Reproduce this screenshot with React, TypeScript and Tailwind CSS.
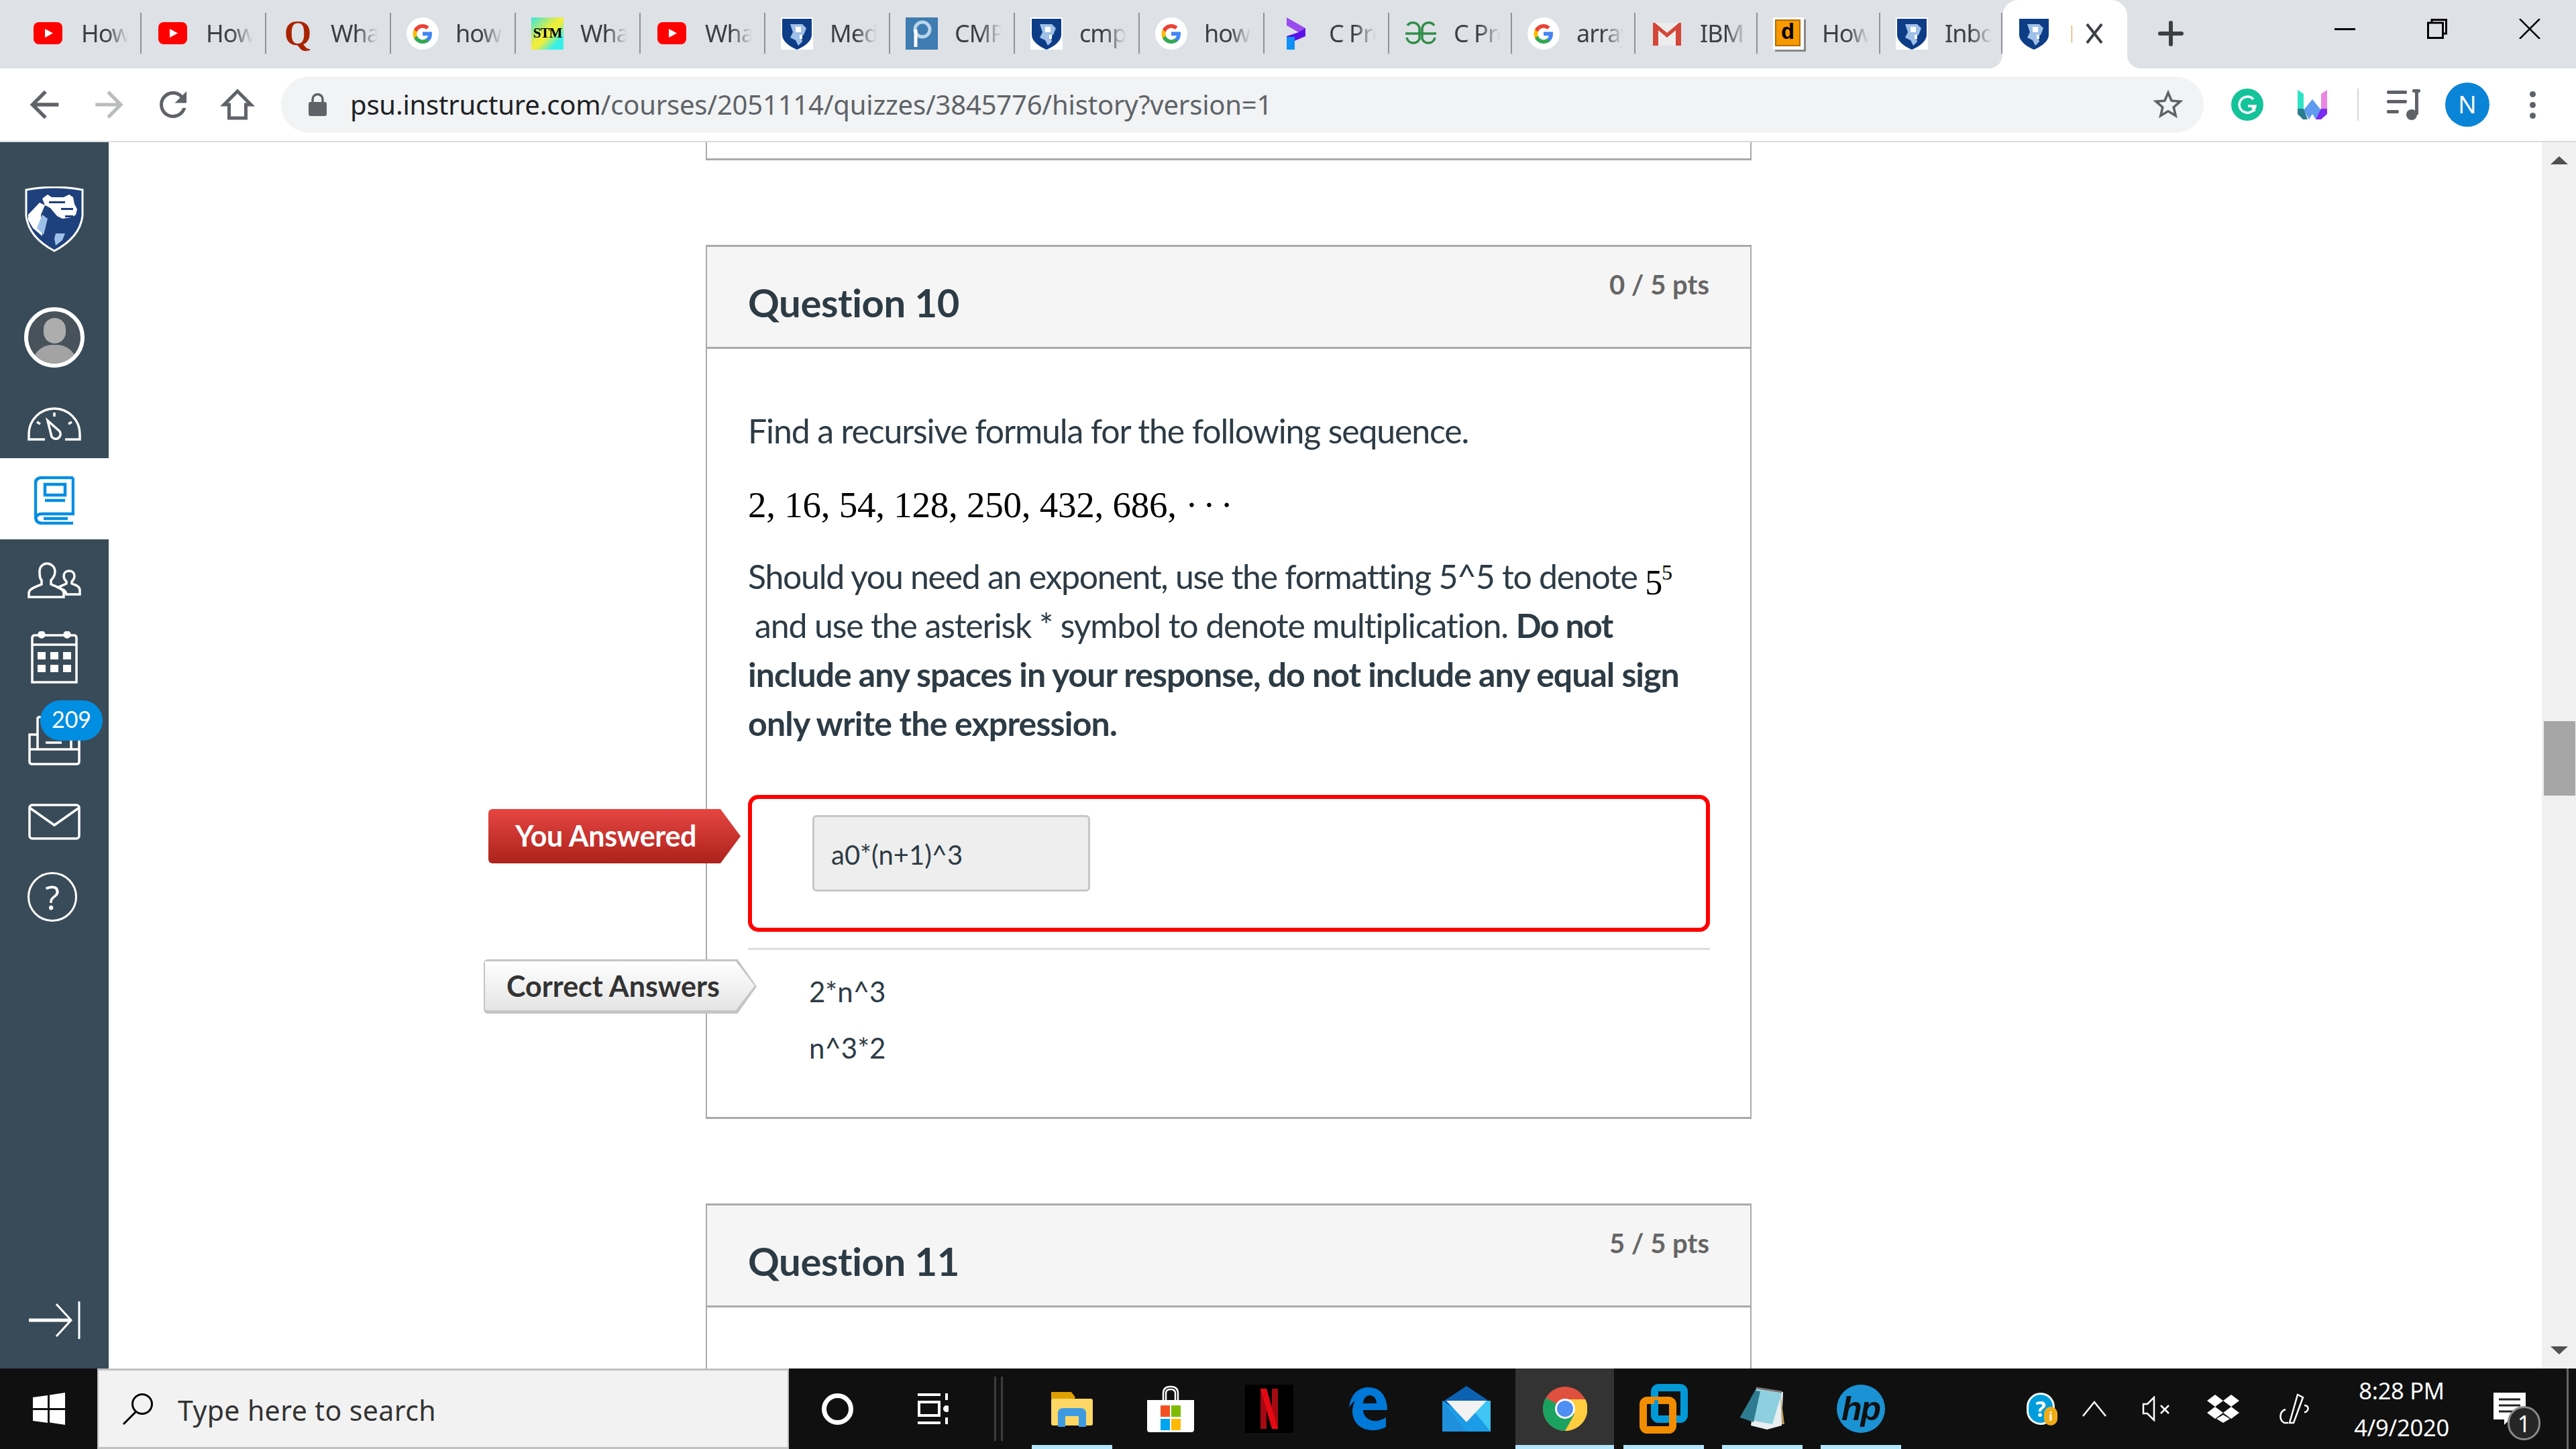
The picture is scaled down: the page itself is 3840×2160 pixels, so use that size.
import React from "react";

const Yt = () => (
  <svg width="48" height="48" viewBox="0 0 48 48"><rect x="2" y="7" width="43" height="33" rx="8" fill="#f00" /><path d="M19 17l12 6.5L19 30z" fill="#fff" /></svg>
);
const Quora = () => (
  <div className="w-[48px] h-[48px] flex items-center justify-center text-[#a82400] font-bold text-[52px] leading-none [font-family:'Liberation_Serif',serif]">Q</div>
);
const GoogleG = () => (
  <svg width="48" height="48" viewBox="0 0 48 48">
    <circle cx="24" cy="24" r="24" fill="#fff" />
    <path d="M38 24.500c0-1-.1-2-.3-3H24v5.700h7.900c-.3 1.800-1.400 3.400-2.900 4.400v3.700h4.700c2.800-2.500 4.300-6.300 4.300-10.800z" fill="#4285f4" />
    <path d="M24 39c3.900 0 7.200-1.300 9.700-3.500L29 31.800c-1.300.9-3 1.400-5 1.400-3.800 0-7-2.500-8.200-6h-4.800v3.800C13.400 35.700 18.300 39 24 39z" fill="#34a853" />
    <path d="M15.800 27.200c-.6-1.800-.6-3.700 0-5.500v-3.800H11c-2 4-2 9.100 0 13.100z" fill="#fbbc05" />
    <path d="M24 15.800c2.100 0 4 .7 5.500 2.100l4.100-4.100C31 11.400 27.700 10 24 10c-5.700 0-10.600 3.300-13 8l4.800 3.700c1.200-3.400 4.400-5.900 8.200-5.900z" fill="#ea4335" />
  </svg>
);
const Stm = () => (
  <div className="w-[48px] h-[48px] flex items-center justify-center bg-[linear-gradient(135deg,#36e6e0_0%,#f0ee3c_45%,#f0ee3c_55%,#36f0e8_80%)] text-black font-bold text-[21px] tracking-[-1px] leading-none [font-family:'Liberation_Serif',serif]">STM</div>
);
const Psu = () => (
  <svg width="48" height="48" viewBox="0 0 48 48">
    <rect width="48" height="48" fill="#fff" />
    <path d="M2 2h44v24c0 9-10 17-22 22C12 43 2 35 2 26z" fill="#0d3d86" />
    <path d="M14 10h18l6 6-4 10-4 2 2 8-6 6-4-8-8-4 4-8z" fill="#9fc0e6" />
    <path d="M22 14h8v8h-8zM28 26h4v6h-4z" fill="#fff" />
  </svg>
);
const Piazza = () => (
  <svg width="48" height="48" viewBox="0 0 48 48"><rect width="48" height="48" fill="#3e7cb1" /><circle cx="25" cy="18" r="11" fill="none" stroke="#b9d4ea" strokeWidth="5" /><path d="M15 18v26" stroke="#fff" strokeWidth="5" /></svg>
);
const Prog = () => (
  <svg width="48" height="48" viewBox="0 0 48 48"><path d="M10 0L38 16V28L10 12Z" fill="#9a4cf0" /><path d="M38 16V28L10 40V28L28 22Z" fill="#5a12e8" /><path d="M10 29h12V48H10Z" fill="#1090f5" /></svg>
);
const Gfg = () => (
  <svg width="48" height="48" viewBox="0 0 48 48" fill="none" stroke="#2f8d46" strokeWidth="3.500"><path d="M1 24h46" /><path d="M4 12a10 10 0 0 1 18 4v16a10 10 0 0 1-19-2" /><path d="M44 12a10 10 0 0 0-18 4v16a10 10 0 0 0 19-2" /></svg>
);
const Gmail = () => (
  <svg width="48" height="48" viewBox="0 0 48 48"><path d="M3 8h42v34H3z" fill="#ececec" /><path d="M3 42V8h3l18 15L42 8h3v34h-8V19L24 30 11 19v23z" fill="#d44638" /></svg>
);
const Dict = () => (
  <div className="w-[46px] h-[48px] bg-white p-[3px] pr-[5px] pb-[5px] shadow-[3px_3px_0_#888]">
    <div className="w-full h-full bg-[#f79a00] border-[2px] border-[#b26b00] flex items-center justify-center text-black font-bold text-[34px] leading-none [font-family:'Liberation_Mono',monospace]">d</div>
  </div>
);

const icons: Record<string, React.ReactNode> = {
  yt: <Yt />, q: <Quora />, g: <GoogleG />, stm: <Stm />, psu: <Psu />, p: <Piazza />, pr: <Prog />, gfg: <Gfg />, m: <Gmail />, d: <Dict />,
};

const tabs: { i: string; t: string; w: string }[] = [
  { i: "yt", t: "How", w: "w-[186px]" },
  { i: "yt", t: "How", w: "w-[186px]" },
  { i: "q", t: "What", w: "w-[186px]" },
  { i: "g", t: "how", w: "w-[186px]" },
  { i: "stm", t: "What", w: "w-[186px]" },
  { i: "yt", t: "What", w: "w-[186px]" },
  { i: "psu", t: "Med", w: "w-[186px]" },
  { i: "p", t: "CMP", w: "w-[186px]" },
  { i: "psu", t: "cmp", w: "w-[186px]" },
  { i: "g", t: "how", w: "w-[186px]" },
  { i: "pr", t: "C Pro", w: "w-[186px]" },
  { i: "gfg", t: "C Pro", w: "w-[183px]" },
  { i: "g", t: "array", w: "w-[184px]" },
  { i: "m", t: "IBM", w: "w-[182px]" },
  { i: "d", t: "How", w: "w-[183px]" },
  { i: "psu", t: "Inbox", w: "w-[182px]" },
];

function TabStrip() {
  return (
    <div className="h-[102px] bg-[#dee1e6] flex items-start pl-[25px] shrink-0">
      {tabs.map((tab, idx) => (
        <div key={idx} className={`${tab.w} h-[102px] flex items-center shrink-0 pb-[3px]`}>
          <div className="ml-[23px] w-[48px] h-[48px] shrink-0">{icons[tab.i]}</div>
          <div className="ml-[25px] w-[70px] overflow-hidden whitespace-nowrap text-[36px] leading-[48px] text-[#3c4043] tracking-[-1px] [font-family:'Noto_Sans',sans-serif] [mask-image:linear-gradient(to_right,black_55%,transparent)]">{tab.t}</div>
          <div className="ml-auto w-[2px] h-[61px] bg-[#8f9296] shrink-0" />
        </div>
      ))}
      <div className="relative w-[186px] h-[102px] bg-white rounded-t-[24px] flex items-center shrink-0 pb-[3px]">
        <svg className="absolute left-[-21px] bottom-0" width="21" height="22" viewBox="0 0 21 22"><path d="M21 0v22H0c12 0 21-8 21-22z" fill="#fff" /></svg>
        <svg className="absolute right-[-21px] bottom-0" width="21" height="22" viewBox="0 0 21 22"><path d="M0 0v22h21C9 22 0 14 0 0z" fill="#fff" /></svg>
        <div className="ml-[23px] w-[48px] h-[48px] shrink-0"><Psu /></div>
        <div className="ml-[29px] w-[4px] h-[36px] overflow-hidden text-[36px] leading-[36px] text-[#b8763c]">I</div>
        <svg className="ml-[19px]" width="28" height="32" viewBox="0 0 28 32" fill="none" stroke="#3c4043" strokeWidth="4"><path d="M3 2l22 28M25 2L3 30" /></svg>
      </div>
      <div className="w-[130px] h-[102px] flex items-center justify-center shrink-0 pb-[3px]">
        <svg width="38" height="38" viewBox="0 0 38 38" fill="none" stroke="#3c4043" strokeWidth="6" strokeLinecap="round"><path d="M19 3v32M3 19h32" /></svg>
      </div>
      <div className="ml-auto flex">
        <div className="w-[138px] h-[86px] flex items-center justify-center"><div className="w-[31px] h-[3px] bg-black" /></div>
        <div className="w-[138px] h-[86px] flex items-center justify-center">
          <svg width="30" height="30" viewBox="0 0 30 30" fill="none" stroke="#000" strokeWidth="3"><path d="M7 6V1.500h21.500V22H24" /><rect x="1.500" y="6" width="22" height="22.500" /></svg>
        </div>
        <div className="w-[138px] h-[86px] flex items-center justify-center">
          <svg width="32" height="30" viewBox="0 0 32 30" fill="none" stroke="#000" strokeWidth="2.500"><path d="M1 0l30 30M31 0L1 30" /></svg>
        </div>
      </div>
    </div>
  );
}

function Toolbar() {
  return (
    <div className="h-[108px] bg-white flex items-center shrink-0 relative">
      <div className="w-[132px] flex justify-center shrink-0">
        <svg width="64" height="64" viewBox="0 0 24 24" fill="#5f6368"><path d="M20 11H7.830l5.590-5.590L12 4l-8 8 8 8 1.410-1.410L7.830 13H20z" /></svg>
      </div>
      <div className="w-[62px] flex justify-center shrink-0">
        <svg width="64" height="64" viewBox="0 0 24 24" fill="#babcbe"><path d="M4 11h12.170l-5.590-5.590L12 4l8 8-8 8-1.410-1.410L16.170 13H4z" /></svg>
      </div>
      <div className="w-[128px] flex justify-center shrink-0">
        <svg width="60" height="60" viewBox="0 0 24 24" fill="#5f6368"><path d="M17.650 6.350A7.958 7.958 0 0 0 12 4c-4.420 0-7.990 3.580-7.990 8s3.570 8 7.990 8c3.730 0 6.840-2.550 7.730-6h-2.080A5.990 5.990 0 0 1 12 18c-3.310 0-6-2.690-6-6s2.690-6 6-6c1.660 0 3.140.69 4.220 1.780L13 11h7V4z" /></svg>
      </div>
      <div className="w-[64px] flex justify-center shrink-0">
        <svg width="60" height="60" viewBox="0 0 24 24" fill="none" stroke="#5f6368" strokeWidth="2"><path d="M12 4l-8 8h3v8h10v-8h3z" /></svg>
      </div>
      <div className="ml-[33px] w-[2866px] h-[84px] bg-[#f1f3f4] rounded-[42px] flex items-center shrink-0">
        <svg className="ml-[41px]" width="27" height="34" viewBox="0 0 27 34"><path d="M6 14V9a7.500 7.500 0 0 1 15 0v5" fill="none" stroke="#5f6368" strokeWidth="3.500" /><rect y="13" width="27" height="21" rx="3" fill="#5f6368" /></svg>
        <div className="ml-[35px] text-[40px] leading-[48px] tracking-[-0.200px] text-[#5f6368] [font-family:'Noto_Sans',sans-serif] whitespace-nowrap">
          <span className="text-[#202124]">psu.instructure.com</span>/courses/2051114/quizzes/3845776/history?version=1
        </div>
        <svg className="ml-auto mr-[26px]" width="54" height="54" viewBox="0 0 24 24" fill="#5f6368"><path d="M22 9.240l-7.190-.62L12 2 9.190 8.630 2 9.240l5.460 4.730L5.820 21 12 17.270 18.180 21l-1.630-7.030zM12 15.400l-3.760 2.270 1-4.280-3.320-2.880 4.380-.38L12 6.100l1.710 4.040 4.380.38-3.320 2.880 1 4.280z" /></svg>
      </div>
      <div className="ml-[41px] w-[48px] h-[48px] rounded-full bg-[#15c39a] flex items-center justify-center shrink-0">
        <svg width="32" height="32" viewBox="0 0 32 32" fill="none" stroke="#fff" strokeWidth="3.500"><path d="M25 8a12 12 0 1 0 3 10H17" /><path d="M23 18l4 8" /></svg>
      </div>
      <svg className="ml-[50px] shrink-0" width="46" height="48" viewBox="0 0 46 48">
        <path d="M1 2l9 6v22l-9 8z" fill="#2fe4c6" /><path d="M45 2l-9 6v22l9 8z" fill="#e986e0" /><path d="M23 16l13 16-8 14-5-8-5 8-8-14z" fill="#5f9cf0" /><path d="M1 30l9 0 6 16-7 0-8-8z" fill="#2c7c90" /><path d="M45 30h-9l-8 16h8l9-8z" fill="#7a2cf0" />
      </svg>
      <div className="ml-[44px] w-[2px] h-[48px] bg-[#d5d7da] shrink-0" />
      <svg className="ml-[42px] shrink-0" width="50" height="46" viewBox="0 0 50 46" fill="#5f6368"><rect y="2" width="30" height="5" rx="2" /><rect y="16" width="30" height="5" rx="2" /><rect y="31" width="18" height="5" rx="2" /><rect x="38" y="0" width="12" height="5" rx="2" /><rect x="42" y="0" width="5" height="38" /><circle cx="37" cy="38" r="8" /></svg>
      <div className="ml-[37px] w-[66px] h-[66px] rounded-full bg-[#0a84d6] text-white text-[36px] flex items-center justify-center shrink-0 [font-family:'Noto_Sans',sans-serif]">N</div>
      <div className="ml-[60px] flex flex-col gap-[7px] shrink-0">
        <div className="w-[9px] h-[9px] rounded-full bg-[#5f6368]" />
        <div className="w-[9px] h-[9px] rounded-full bg-[#5f6368]" />
        <div className="w-[9px] h-[9px] rounded-full bg-[#5f6368]" />
      </div>
    </div>
  );
}

function Sidebar() {
  return (
    <div className="w-[162px] shrink-0 bg-[#394b58] flex flex-col">
      <div className="h-[230px] flex items-center justify-center">
        <svg width="88" height="98" viewBox="0 0 88 98">
          <path d="M2 5Q44-3 86 5V44Q82 76 44 96 6 76 2 44Z" fill="#1e407c" stroke="#fff" strokeWidth="3" />
          <path d="M26 18l8-6 6 4h18l8-4 6 4 2 10 4 8-2 8-6 4-14 2-8-4-10-12-8-4z" fill="#fff" />
          <path d="M5 42L22 24l8 4-6 14 2 32-14-12-7-12z" fill="#fff" />
          <path d="M18 62l8-20 8 6-6 24z" fill="#9cc0e8" />
          <path d="M46 70h14l-4 10-10 8-2-10z" fill="#9cc0e8" />
          <path d="M36 22h24v3H36zM54 32h18v3H54zM60 43h12v3H60z" fill="#1e407c" />
        </svg>
      </div>
      <div className="h-[122px] flex items-center justify-center">
        <div className="relative w-[90px] h-[90px] rounded-full border-[6px] border-white bg-[#47525b] overflow-hidden">
          <div className="absolute left-[23px] top-[10px] w-[33px] h-[38px] rounded-full bg-[#adadad]" />
          <div className="absolute left-[6px] top-[50px] w-[67px] h-[40px] rounded-t-[30px] bg-[#a3a3a3]" />
        </div>
      </div>
      <div className="h-[119px] flex items-center justify-center pt-[14px]">
        <svg width="80" height="56" viewBox="0 0 80 56" fill="none" stroke="#fff" strokeWidth="3.500">
          <path d="M26 52H2V44A38 38 0 0 1 78 44V52H56" />
          <path d="M40 12v6M14 26l5 3M66 26l-5 3" />
          <path d="M30 24l18 16a7 7 0 1 1-12 8z" />
        </svg>
      </div>
      <div className="h-[121px] bg-white flex items-center justify-center pt-[4px]">
        <svg width="60" height="72" viewBox="0 0 60 72" fill="none" stroke="#008ee2" strokeWidth="4.500">
          <path d="M58 2H12Q2 2 2 10V60Q2 70 12 70H58" />
          <path d="M58 2V56H12Q2 56 2 64" />
          <rect x="16" y="12" width="30" height="16" />
          <path d="M14 63H50M16 36h30" />
        </svg>
      </div>
      <div className="h-[122px] flex items-center justify-center">
        <svg width="80" height="54" viewBox="0 0 80 54" fill="none" stroke="#fff" strokeWidth="3.500">
          <path d="M18 14C18 6 24 2 29 2s12 4 12 12c0 6-3 10-6 13v6c6 3 19 6 19 13v6H2v-6c0-7 13-10 19-13v-6c-3-3-3-7-3-13z" />
          <path d="M54 21c0-5 3-8 8-8s8 3 8 8c0 4-2 6-4 8v3c4 2 12 3 12 10v6H58c-1-7-7-8-12-10 2-2 6-3 12-6v-3c-2-2-4-4-4-8z" />
        </svg>
      </div>
      <div className="h-[108px] flex items-center justify-center">
        <svg width="70" height="78" viewBox="0 0 70 78" fill="none" stroke="#fff" strokeWidth="3.500">
          <path d="M2 76V10Q2 6 6 6H64Q68 6 68 10V76Z" />
          <path d="M2 20H68" />
          <circle cx="16" cy="5" r="4" fill="#fff" /><circle cx="54" cy="5" r="4" fill="#fff" />
          <g fill="#fff" stroke="none"><path d="M10 31h12v11H10zM29 31h12v11H29zM48 31h12v11H48zM10 50h12v11H10zM29 50h12v11H29zM48 50h12v11H48z" /></g>
        </svg>
      </div>
      <div className="relative h-[140px] flex items-center justify-center">
        <svg width="78" height="74" viewBox="0 0 78 74" fill="none" stroke="#fff" strokeWidth="3.500">
          <path d="M14 28H2V68Q2 72 6 72H72Q76 72 76 68V28H64" />
          <path d="M2 50H76M14 2V50M64 14V50" />
          <path d="M14 2H60M26 40H50" />
        </svg>
        <div className="absolute left-[60px] top-[10px] w-[93px] h-[60px] rounded-full bg-[#008ee2] text-white text-[34px] leading-[56px] text-center">209</div>
      </div>
      <div className="h-[102px] flex items-center justify-center">
        <svg width="78" height="54" viewBox="0 0 78 54" fill="none" stroke="#fff" strokeWidth="3.500"><rect x="2" y="2" width="74" height="50" rx="4" /><path d="M2 6l37 26L76 6" /></svg>
      </div>
      <div className="h-[122px] flex items-center justify-center pr-[6px]">
        <div className="w-[74px] h-[74px] rounded-full border-[3.500px] border-white flex items-center justify-center text-white text-[50px] leading-none [font-family:'Noto_Sans',sans-serif]">?</div>
      </div>
      <div className="mt-auto h-[102px] flex items-start justify-center pt-[2px]">
        <svg width="78" height="56" viewBox="0 0 78 56" fill="none" stroke="#fff"><path d="M1 28H64" strokeWidth="5" /><path d="M42 4l22 24-22 24" strokeWidth="3" /><path d="M76 0V56" strokeWidth="3" /></svg>
      </div>
    </div>
  );
}

function CardHeader({ q, pts }: { q: string; pts: string }) {
  return (
    <div className="h-[155px] bg-[#f5f5f5] border-y-[3px] border-[#aaaaaa] px-[61px] flex justify-between">
      <div className="pt-[47px] text-[58px] leading-[72px] font-bold text-[#2d3b45] tracking-[-0.400px]">{q}</div>
      <div className="pt-[24px] text-[40px] leading-[64px] font-bold text-[#666666]">{pts}</div>
    </div>
  );
}

function Main() {
  return (
    <div className="flex-1 min-w-0 overflow-hidden bg-white pl-[890px]">
      <div className="w-[1559px] h-[27px] border-x-[2px] border-b-[3px] border-[#aaaaaa]" />
      <div className="mt-[126px] w-[1559px] border-x-[2px] border-[#aaaaaa] border-b-[3px] h-[1303px]">
        <CardHeader q="Question 10" pts="0 / 5 pts" />
        <div className="pl-[61px] pr-[20px] text-[#2d3b45] text-[50px] tracking-[-1.150px] [font-family:'Lato',sans-serif]">
          <p className="mt-[86px] leading-[72px]">Find a recursive formula for the following sequence.</p>
          <p className="mt-[39px] leading-[72px] text-black text-[55px] tracking-[-0.250px] [font-family:'Liberation_Serif',serif]">2, 16, 54, 128, 250, 432, 686, <span className="tracking-[-3px]">· · ·</span></p>
          <p className="mt-[34px] leading-[73px] whitespace-nowrap">
            <span className="tracking-[-1.300px]">Should you need an exponent, use the formatting 5^5 to denote </span><span className="text-black [font-family:'Liberation_Serif',serif] text-[52px] leading-none relative top-[8px]">5</span><span className="text-black [font-family:'Liberation_Serif',serif] text-[32px] leading-none relative top-[-14px]">5</span>
            <br />
            <span className="ml-[10px]">and use the asterisk * symbol to denote multiplication. </span><strong className="tracking-[-1.600px]">Do not</strong>
            <br />
            <strong className="tracking-[-1px]">include any spaces in your response, do not include any equal sign</strong>
            <br />
            <strong className="tracking-[-0.800px]">only write the expression.</strong>
          </p>
        </div>
        <div className="relative ml-[61px] mt-[70px] w-[1434px]">
          <div className="h-[204px] border-[6px] border-[#ff0000] rounded-[15px] pl-[90px] pt-[24px]">
            <div className="w-[414px] h-[114px] bg-[#eeeeee] border-[3px] border-[#c7c7c7] rounded-[6px] pl-[25px] pt-[24px] text-[40px] leading-[64px] text-[#2d3b45]">a0*(n+1)^3</div>
          </div>
          <div className="absolute left-[-387px] top-[21px] w-[376px] h-[81px] bg-[linear-gradient(#e64542,#ad221c)] [clip-path:polygon(0_0,92%_0,100%_50%,92%_100%,0_100%)] rounded-l-[6px] pl-[40px] text-white font-bold text-[43px] leading-[80px] tracking-[-0.300px]">You Answered</div>
          <div className="mt-[24px] h-[3px] bg-[#dddddd]" />
          <div className="relative pl-[91px] pt-[20px] text-[42px] leading-[84px] text-[#2d3b45]">
            <div>2*n^3</div>
            <div>n^3*2</div>
            <div className="absolute left-[-394px] top-[14px] w-[407px] h-[81px] bg-[#c4c4c4] [clip-path:polygon(0_0,93%_0,100%_50%,93%_100%,0_100%)] rounded-l-[6px]">
              <div className="ml-[2px] mt-[3px] w-[402px] h-[73px] bg-[linear-gradient(#ffffff,#e4e4e4)] [clip-path:polygon(0_0,93%_0,100%_50%,93%_100%,0_100%)] pl-[32px] font-bold text-[#333333] text-[43px] leading-[74px]">Correct Answers</div>
            </div>
          </div>
        </div>
      </div>
      <div className="mt-[126px] w-[1559px] border-x-[2px] border-[#aaaaaa] h-[400px]">
        <CardHeader q="Question 11" pts="5 / 5 pts" />
      </div>
    </div>
  );
}

function Scrollbar() {
  return (
    <div className="w-[51px] shrink-0 bg-[#f0f0f0] flex flex-col items-center pt-[21px] pb-[21px]">
      <div className="w-0 h-0 border-x-[13px] border-x-transparent border-b-[12px] border-b-[#505050]" />
      <div className="mt-[830px] ml-[2px] w-[47px] h-[111px] bg-[#a6a6a6]" />
      <div className="mt-auto w-0 h-0 border-x-[13px] border-x-transparent border-t-[12px] border-t-[#505050]" />
    </div>
  );
}

const App1 = ({ icon, active, on }: { icon: React.ReactNode; active?: boolean; on?: boolean }) => (
  <div className={`w-[147px] h-full flex flex-col items-center shrink-0 ${active ? "bg-[#333333]" : ""}`}>
    <div className="flex-1 flex items-center justify-center pt-[6px]">{icon}</div>
    <div className={`h-[6px] ${active ? "w-full" : "w-[120px]"} ${on ? "bg-[#b3e5fc]" : ""}`} />
  </div>
);

function Taskbar() {
  return (
    <div className="h-[120px] bg-[#101010] flex items-stretch shrink-0">
      <div className="w-[145px] flex items-center justify-center shrink-0">
        <svg width="48" height="48" viewBox="0 0 48 48" fill="#fff"><path d="M0 7l22-3v19H0zM25 3.500L48 0v23H25zM0 26h22v19L0 42zM25 26h23v22l-23-3.500z" /></svg>
      </div>
      <div className="w-[1031px] bg-[#f2f2f2] border-x-[2px] border-y-[3px] border-[#c0c0c0] flex items-center shrink-0">
        <svg className="ml-[34px]" width="48" height="48" viewBox="0 0 48 48" fill="none" stroke="#000" strokeWidth="3"><circle cx="31" cy="17" r="14.500" /><path d="M21 29L3 47" /></svg>
        <div className="ml-[36px] pt-[3px] text-[41px] leading-[48px] text-[#333333] tracking-[0.400px] [font-family:'Noto_Sans',sans-serif]">Type here to search</div>
      </div>
      <div className="w-[144px] flex items-center justify-center shrink-0">
        <div className="w-[47px] h-[47px] rounded-full border-[7px] border-white" />
      </div>
      <div className="w-[142px] flex items-center justify-center shrink-0">
        <svg width="46" height="46" viewBox="0 0 46 46" fill="none" stroke="#fff" strokeWidth="4"><path d="M0 2h34M0 44h34" /><rect x="2" y="13" width="30" height="20" /><path d="M43 0v10M43 36v10" /><circle cx="43" cy="23" r="3" fill="#fff" /></svg>
      </div>
      <div className="w-[62px] flex justify-start pt-[12px] gap-[7px] pl-[20px] shrink-0">
        <div className="w-[3px] h-[96px] bg-[#3c3c3c]" />
        <div className="w-[3px] h-[96px] bg-[#3c3c3c]" />
      </div>
      <App1 on icon={
        <svg width="64" height="54" viewBox="0 0 64 54"><path d="M1 2h30l6 8-6 8H1z" fill="#e0a000" /><rect x="1" y="12" width="62" height="40" rx="3" fill="#ffd767" /><path d="M11 54V34q0-8 8-8h26q8 0 8 8v20H42V38H22v16z" fill="#3e9ae0" /></svg>
      } />
      <App1 icon={
        <svg width="70" height="70" viewBox="0 0 70 70"><path d="M24 22V12q0-10 11-10t11 10v10M28 22V12q0-6 7-6t7 6v10" fill="none" stroke="#fff" strokeWidth="2.500" /><path d="M0 22h70v44q0 4-4 4H4q-4 0-4-4z" fill="#fff" /><path d="M20 30h14v17H20z" fill="#f25022" /><path d="M36 30h14v17H36z" fill="#7fba00" /><path d="M20 50h14v17H20z" fill="#00a4ef" /><path d="M36 50h14v17H36z" fill="#ffb900" /></svg>
      } />
      <App1 icon={
        <div className="w-[72px] h-[72px] bg-black flex justify-center items-center">
          <svg width="26" height="60" viewBox="0 0 26 60"><path d="M0 0h9v60H0zM17 0h9v60h-9z" fill="#a50a12" /><path d="M0 0h9l17 60h-9z" fill="#e50914" /></svg>
        </div>
      } />
      <App1 icon={
        <svg width="58" height="64" viewBox="0 0 58 64"><path d="M1 30C3 12 14 0 30 0c18 0 28 14 28 34H22c0 10 10 18 22 16 4-1 8-3 12-5v14c-6 4-14 5-20 5-20 0-30-14-30-28 0-5 2-12 4-16-4 3-7 6-9 10zM22 24h20c0-7-4-12-10-12s-10 5-10 12z" fill="#0078d7" /></svg>
      } />
      <App1 icon={
        <svg width="72" height="68" viewBox="0 0 72 68"><path d="M36 0l36 24v44H0V24z" fill="#0c62b0" /><path d="M0 22v46h72V22L36 46z" fill="#1c9be6" /><path d="M72 22v46L36 24z" fill="#3fc6f5" /><path d="M6 22h60L36 54z" fill="#f2f2f2" /><path d="M0 68V22l36 46z" fill="#1e90dc" /></svg>
      } />
      <App1 active on icon={
        <svg width="66" height="66" viewBox="0 0 66 66">
          <circle cx="33" cy="33" r="33" fill="#e0503f" />
          <path d="M33 33L4.400 16.500A33 33 0 0 0 33 66l16-28z" fill="#1ba261" />
          <path d="M33 19h30.400A33 33 0 0 1 33 66l14-25z" fill="#ffcd40" />
          <circle cx="33" cy="33" r="15" fill="#fff" /><circle cx="33" cy="33" r="12" fill="#4f8ef2" />
        </svg>
      } />
      <App1 on icon={
        <svg width="72" height="74" viewBox="0 0 72 74" fill="none" strokeWidth="11"><rect x="22.500" y="5.500" width="44" height="47" rx="6" stroke="#0099d8" /><rect x="5.500" y="24.500" width="44" height="44" rx="6" stroke="#f28d00" /><path d="M22 24h6v6h-6z" fill="#0099d8" stroke="none" /></svg>
      } />
      <App1 on icon={
        <svg width="66" height="66" viewBox="0 0 66 66"><path d="M24 2l40 6-2 50-22 6-24-6z" fill="#e9eef0" /><path d="M60 8l6 48-4 0z" fill="#b99a5e" /><path d="M24 4l38 6-14 46-22-4-26-6z" fill="#8ed0e0" /><path d="M0 46L22 6l8 1-10 46z" fill="#2f7c90" /><path d="M24 2l38 6" stroke="#777" strokeWidth="3" /></svg>
      } />
      <App1 on icon={
        <div className="w-[72px] h-[72px] rounded-full bg-[#1b92d3] flex items-center justify-center text-[#101010] italic font-bold text-[50px] leading-none tracking-[-2px] [font-family:'Liberation_Sans',sans-serif]">hp</div>
      } />
      <div className="ml-[145px] flex items-center text-white shrink-0">
        <div className="w-[90px] flex justify-center pl-[10px]">
          <div className="relative w-[42px] h-[48px] rounded-full bg-[#009ddc] border-[3px] border-white flex items-center justify-center text-white font-bold text-[32px] leading-none [font-family:'Noto_Sans',sans-serif]">?
            <div className="absolute right-[-7px] bottom-[-4px] w-[20px] h-[28px] rounded-full bg-[#f0ac18] text-[18px] text-center leading-[28px]">i</div>
          </div>
        </div>
        <div className="w-[80px] flex justify-center">
          <svg width="36" height="24" viewBox="0 0 36 24" fill="none" stroke="#fff" strokeWidth="2.500"><path d="M1 23L18 2l17 21" /></svg>
        </div>
        <div className="w-[106px] flex justify-center">
          <svg width="44" height="38" viewBox="0 0 44 38" fill="none" stroke="#fff" strokeWidth="2.500"><path d="M2 12v14h6l10 10V2L8 12z" /><path d="M28 14l12 12M40 14L28 26" /></svg>
        </div>
        <div className="w-[92px] flex justify-center">
          <svg width="48" height="42" viewBox="0 0 48 42" fill="#fff"><path d="M12 0l12 9-12 9L0 9zM36 0l12 9-12 9-12-9zM12 18l12 9-12 9-12-9zM36 18l12 9-12 9-12-9zM24 30l10 6-10 6-10-6z" /></svg>
        </div>
        <div className="w-[122px] flex justify-center">
          <svg width="48" height="46" viewBox="0 0 48 46" fill="none" stroke="#fff" strokeWidth="2.500"><path d="M28 2l8 4-14 38-6 0z" /><path d="M10 24a11 11 0 0 0-2 20h6M38 18c6 0 8 6 2 10h-2" /></svg>
        </div>
        <div className="w-[196px] flex flex-col items-center text-[34.500px] leading-[55px] tracking-[-0.300px] [font-family:'Noto_Sans',sans-serif]">
          <div>8:28 PM</div>
          <div>4/9/2020</div>
        </div>
        <div className="relative w-[148px] h-full">
          <svg className="absolute left-[39px] top-[36px]" width="48" height="48" viewBox="0 0 48 48"><path d="M0 0h48v40H24l-8 8v-8H0z" fill="#fff" /><path d="M8 10h32M8 19h32M8 28h32" stroke="#222" strokeWidth="3" /></svg>
          <div className="absolute left-[60px] top-[56px] w-[49px] h-[51px] rounded-full bg-[#262626] border-[3px] border-[#8a8a8a] flex items-center justify-center text-[34px] leading-none [font-family:'Noto_Sans',sans-serif]">1</div>
        </div>
        <div className="w-[3px] h-full bg-[#666666]" />
      </div>
    </div>
  );
}

export default function App() {
  return (
    <div className="w-[3840px] h-[2160px] flex flex-col overflow-hidden bg-white [font-family:'Lato',sans-serif]">
      <TabStrip />
      <Toolbar />
      <div className="h-[2px] bg-[#dadce0] shrink-0" />
      <div className="flex-1 min-h-0 flex">
        <Sidebar />
        <Main />
        <Scrollbar />
      </div>
      <Taskbar />
    </div>
  );
}
